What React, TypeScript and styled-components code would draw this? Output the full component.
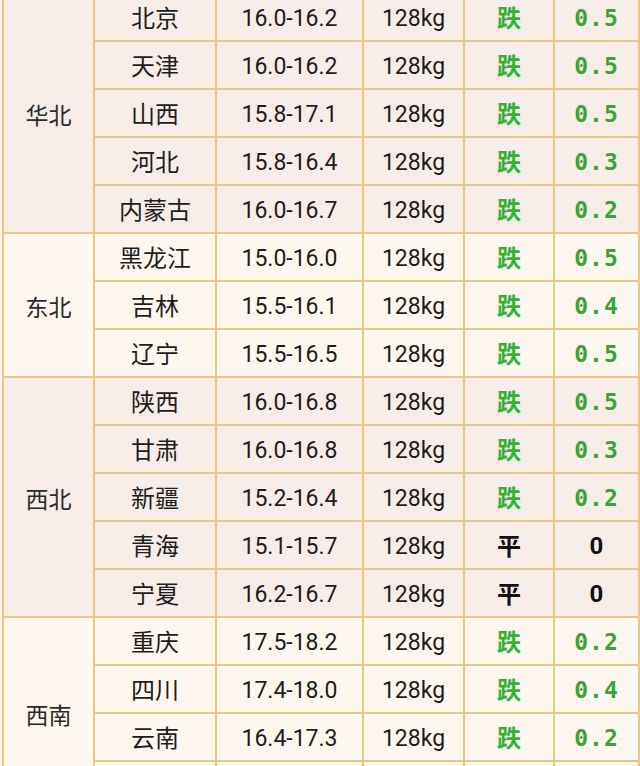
import styled, { createGlobalStyle } from "styled-components";

const GlobalStyle = createGlobalStyle`
  html, body {
    margin: 0;
    padding: 0;
    background: #fdf7f1;
  }
`;

type Row = {
  province: string;
  price: string;
  trend: "跌" | "平" | "涨";
  amount: string;
};

type Group = {
  region: string;
  rows: Row[];
};

const groups: Group[] = [
  {
    region: "华北",
    rows: [
      { province: "北京", price: "16.0-16.2", trend: "跌", amount: "0.5" },
      { province: "天津", price: "16.0-16.2", trend: "跌", amount: "0.5" },
      { province: "山西", price: "15.8-17.1", trend: "跌", amount: "0.5" },
      { province: "河北", price: "15.8-16.4", trend: "跌", amount: "0.3" },
      { province: "内蒙古", price: "16.0-16.7", trend: "跌", amount: "0.2" },
    ],
  },
  {
    region: "东北",
    rows: [
      { province: "黑龙江", price: "15.0-16.0", trend: "跌", amount: "0.5" },
      { province: "吉林", price: "15.5-16.1", trend: "跌", amount: "0.4" },
      { province: "辽宁", price: "15.5-16.5", trend: "跌", amount: "0.5" },
    ],
  },
  {
    region: "西北",
    rows: [
      { province: "陕西", price: "16.0-16.8", trend: "跌", amount: "0.5" },
      { province: "甘肃", price: "16.0-16.8", trend: "跌", amount: "0.3" },
      { province: "新疆", price: "15.2-16.4", trend: "跌", amount: "0.2" },
      { province: "青海", price: "15.1-15.7", trend: "平", amount: "0" },
      { province: "宁夏", price: "16.2-16.7", trend: "平", amount: "0" },
    ],
  },
  {
    region: "西南",
    rows: [
      { province: "重庆", price: "17.5-18.2", trend: "跌", amount: "0.2" },
      { province: "四川", price: "17.4-18.0", trend: "跌", amount: "0.4" },
      { province: "云南", price: "16.4-17.3", trend: "跌", amount: "0.2" },
      { province: "贵州", price: "16.8-17.6", trend: "跌", amount: "0.3" },
    ],
  },
];

// column widths, left to right
const columns = [91, 122, 147, 101, 90, 85];

const Viewport = styled.div`
  height: 766px;
  overflow: hidden;
`;

const Table = styled.table`
  border-collapse: collapse;
  table-layout: fixed;
  width: 636px;
  margin: -8px 0 0 2px;
  font-family: "Noto Sans CJK SC", "Noto Sans", sans-serif;
  color: #222;
`;

const Col = styled.col<{ $w: number }>`
  width: ${(p) => p.$w}px;
`;

const GroupRow = styled.tr<{ $shade: boolean }>`
  background: ${(p) => (p.$shade ? "#f6ece8" : "#fdf7f0")};
`;

const Cell = styled.td`
  height: 46px;
  padding: 0;
  border: 2px solid #e8c882;
  text-align: center;
  vertical-align: middle;
  font-size: 24px;
  line-height: 1;
  color: #1e1e1e;
`;

const RegionCell = styled(Cell)`
  font-size: 23px;
  height: auto;
  padding-top: 2px;
  color: #2a2a2a;
`;

const NumCell = styled(Cell)`
  font-family: Roboto, "Liberation Sans", sans-serif;
  font-size: 23px;
  height: 43px;
  padding-top: 3px;
  color: #1d1d1d;
`;

const TrendCell = styled(Cell)<{ $down: boolean }>`
  font-weight: 700;
  font-size: 24px;
  color: ${(p) => (p.$down ? "#34b234" : "#111")};
`;

const AmountCell = styled(Cell)<{ $down: boolean }>`
  font-family: ${(p) =>
    p.$down
      ? `"DejaVu Sans Mono", "Liberation Mono", monospace`
      : `Roboto, "Liberation Sans", sans-serif`};
  font-weight: 700;
  font-size: ${(p) => (p.$down ? "23px" : "24px")};
  height: 44px;
  padding-top: 2px;
  letter-spacing: ${(p) => (p.$down ? "1px" : "0")};
  color: ${(p) => (p.$down ? "#3aa23a" : "#111")};
`;

export default function App() {
  return (
    <>
      <GlobalStyle />
      <Viewport>
        <Table>
          <colgroup>
            {columns.map((w, i) => (
              <Col key={i} $w={w} />
            ))}
          </colgroup>
          <tbody>
            {groups.map((group, gi) =>
              group.rows.map((row, ri) => {
                const down = row.trend === "跌";
                return (
                  <GroupRow key={group.region + row.province} $shade={gi % 2 === 0}>
                    {ri === 0 && (
                      <RegionCell rowSpan={group.rows.length}>{group.region}</RegionCell>
                    )}
                    <Cell>{row.province}</Cell>
                    <NumCell>{row.price}</NumCell>
                    <NumCell>128kg</NumCell>
                    <TrendCell $down={down}>{row.trend}</TrendCell>
                    <AmountCell $down={down}>{row.amount}</AmountCell>
                  </GroupRow>
                );
              })
            )}
          </tbody>
        </Table>
      </Viewport>
    </>
  );
}
